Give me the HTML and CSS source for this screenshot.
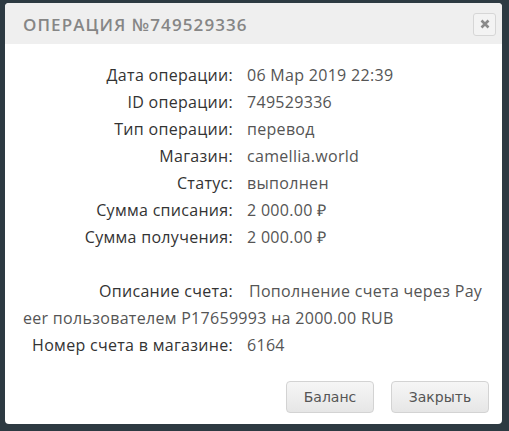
FILE: index.html
```html
<!DOCTYPE html>
<html>
<head>
<meta charset="utf-8">
<link rel="stylesheet" href="styles.css">
</head>
<body>
<div class="dialog">
  <div class="header">
    <div class="title">ОПЕРАЦИЯ №749529336</div>
    <button class="close" aria-label="close">
      <svg width="10" height="10" viewBox="0 0 10 10"><path d="M1.5 1.5 L8.5 8.5 M8.5 1.5 L1.5 8.5" stroke="#8a8a8a" stroke-width="2.6" stroke-linecap="butt"/></svg>
    </button>
  </div>
  <div class="content">
    <div class="row"><span class="label">Дата операции:</span><span class="value">06 Мар 2019 22:39</span></div>
    <div class="row"><span class="label">ID операции:</span><span class="value">749529336</span></div>
    <div class="row"><span class="label">Тип операции:</span><span class="value">перевод</span></div>
    <div class="row"><span class="label">Магазин:</span><span class="value">camellia.world</span></div>
    <div class="row"><span class="label">Статус:</span><span class="value">выполнен</span></div>
    <div class="row"><span class="label">Сумма списания:</span><span class="value">2 000.00 ₽</span></div>
    <div class="row"><span class="label">Сумма получения:</span><span class="value">2 000.00 ₽</span></div>
    <div class="row desc"><span class="label">Описание счета:</span><span class="value">Пополнение счета через Payeer пользователем P17659993 на 2000.00 RUB</span></div>
    <div class="row"><span class="label">Номер счета в магазине:</span><span class="value">6164</span></div>
  </div>
  <div class="footer">
    <button class="btn">Баланс</button>
    <button class="btn">Закрыть</button>
  </div>
</div>
</body>
</html>
```
FILE: styles.css
```css
html, body {
  margin: 0;
  padding: 0;
  background: #2d3a42;
  width: 509px;
  height: 431px;
  overflow: hidden;
}
body {
  padding: 3px 0 0 5px;
  box-sizing: border-box;
}
.dialog {
  width: 497px;
  height: 421px;
  background: #fff;
  border-radius: 4px;
  overflow: hidden;
  display: flex;
  flex-direction: column;
}
.header {
  height: 41px;
  background: #efefef;
  display: flex;
  align-items: center;
  justify-content: space-between;
  padding: 0 6px 0 18px;
  box-sizing: border-box;
}
.title {
  font-family: "Open Sans", sans-serif;
  font-weight: 600;
  font-size: 17px;
  letter-spacing: 1.1px;
  color: #868686;
  margin-top: 1px;
}
.close {
  width: 23px;
  height: 23px;
  border: 1px solid #d6d6d6;
  border-radius: 3px;
  background: #f3f3f3;
  padding: 0;
  display: flex;
  align-items: center;
  justify-content: center;
  margin-top: 1px;
}
.content {
  padding: 18px 0 0 18px;
  font-family: "Open Sans", sans-serif;
  font-size: 16px;
  letter-spacing: 0.3px;
  line-height: 27px;
  flex: 1;
}
.row {
  display: flex;
}
.label {
  width: 210px;
  text-align: right;
  color: #333;
  flex: none;
}
.value {
  color: #555;
  padding-left: 14px;
}
.desc {
  display: block;
  margin-top: 27px;
  word-break: break-all;
  padding-right: 18px;
}
.desc .label {
  display: inline-block;
}
.desc .value {
  padding-left: 16px;
}
.footer {
  display: flex;
  justify-content: flex-end;
  gap: 17px;
  padding: 0 13px 11px 0;
}
.btn {
  height: 32px;
  padding: 0 15px;
  font-family: "DejaVu Sans", Verdana, sans-serif;
  font-size: 14px;
  color: #555;
  border: 1px solid #d3d3d3;
  border-radius: 4px;
  background: linear-gradient(#f6f6f6, #e6e6e6);
}
.btn:first-child { width: 88px; }
.btn:last-child { width: 98px; }
```
